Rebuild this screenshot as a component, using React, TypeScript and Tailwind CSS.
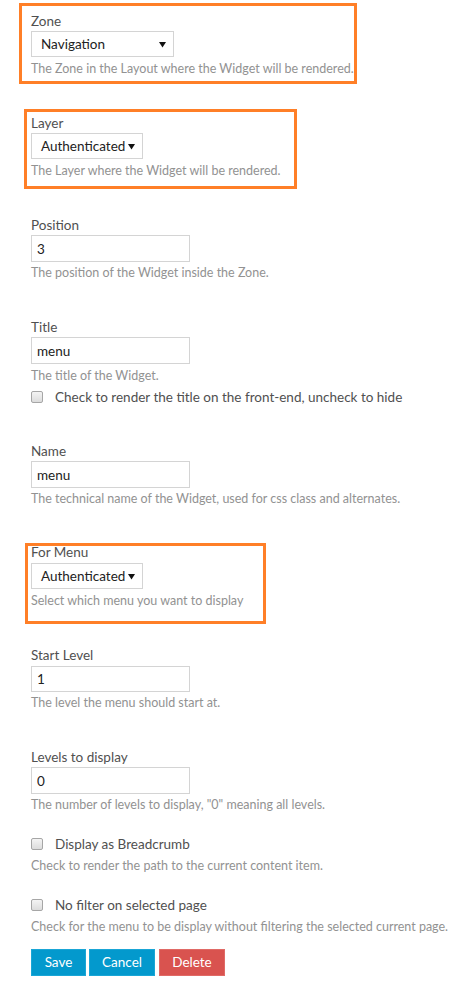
import React from 'react';

const font = { fontFamily: 'Lato, "Open Sans", sans-serif' };

const Label = ({ children, className = '' }: { children: React.ReactNode; className?: string }) => (
	<label className={`block text-[13.5px] leading-[20px] text-[#505050] ${className}`}>{children}</label>
);

const Help = ({ children, className = 'mt-[2px]' }: { children: React.ReactNode; className?: string }) => (
	<div className={`whitespace-nowrap text-[12.5px] leading-[18px] text-[#929292] ${className}`}>{children}</div>
);

const Caret = () => (
	<svg width="7" height="7" viewBox="0 0 7 7" className="shrink-0">
		<path d="M0 1 L7 1 L3.5 6.5 Z" fill="#111" />
	</svg>
);

const Select = ({ value, width }: { value: string; width: string }) => (
	<div
		className={`flex h-[26px] items-center justify-between border border-[#d4d4d4] bg-white pl-[9px] pr-[7px] text-[13.5px] text-[#222] ${width}`}
	>
		<span>{value}</span>
		<Caret />
	</div>
);

const TextInput = ({ value, className = 'h-[27px]' }: { value: string; className?: string }) => (
	<input
		readOnly
		value={value}
		className={`block w-[159px] border border-[#d4d4d4] bg-white px-[5px] text-[13.5px] text-[#222] outline-none ${className}`}
		style={font}
	/>
);

const Check = ({ label, className }: { label: string; className: string }) => (
	<div className={`flex h-[20px] items-center ${className}`}>
		<span className="block h-[12px] w-[12px] rounded-[2px] border border-[#a6a6a6] bg-gradient-to-b from-[#f4f4f4] to-[#dcdcdc]" />
		<span className="ml-[12px] text-[13.5px] text-[#505050]">{label}</span>
	</div>
);

const App = () => {
	return (
		<div className="min-h-[999px] bg-white pb-[20px] pl-[19px] pt-[3px]" style={font}>
			{/* Zone */}
			<div className="w-[338px] border-[3px] border-[#ff7f27] pb-[3px] pl-[9px] pt-[5px]">
				<Label>Zone</Label>
				<Select value="Navigation" width="w-[143px]" />
				<Help className="mt-[3px]">The Zone in the Layout where the Widget will be rendered.</Help>
			</div>

			{/* Layer */}
			<div className="ml-[5px] mt-[25px] w-[273px] border-[3px] border-[#ff7f27] pb-[6px] pl-[4px] pt-[1px]">
				<Label>Layer</Label>
				<Select value="Authenticated" width="w-[112px]" />
				<Help className="mt-[3px]">The Layer where the Widget will be rendered.</Help>
			</div>

			<div className="ml-[12px]">
				<Label className="mt-[26px]">Position</Label>
				<TextInput value="3" />
				<Help>The position of the Widget inside the Zone.</Help>

				<Label className="mt-[35px]">Title</Label>
				<TextInput value="menu" />
				<Help className="mt-[3px]">The title of the Widget.</Help>
				<Check className="mt-[2px]" label="Check to render the title on the front-end, uncheck to hide" />

				<Label className="mt-[34px]">Name</Label>
				<TextInput value="menu" />
				<Help>The technical name of the Widget, used for css class and alternates.</Help>
			</div>

			{/* For Menu */}
			<div className="ml-[6px] mt-[35px] w-[241px] border-[3px] border-[#ff7f27] pb-[11px] pl-[3px]">
				<Label className="-mt-[4px] mb-[1px]">For Menu</Label>
				<Select value="Authenticated" width="w-[112px]" />
				<Help className="mt-[3px]">Select which menu you want to display</Help>
			</div>

			<div className="ml-[12px]">
				<Label className="mb-[1px] mt-[21px]">Start Level</Label>
				<TextInput value="1" className="h-[26px]" />
				<Help>The level the menu should start at.</Help>

				<Label className="mt-[35px]">Levels to display</Label>
				<TextInput value="0" />
				<Help>The number of levels to display, "0" meaning all levels.</Help>

				<Check className="mt-[20px]" label="Display as Breadcrumb" />
				<Help className="mt-[3px]">Check to render the path to the current content item.</Help>

				<Check className="mt-[20px]" label="No filter on selected page" />
				<Help className="mt-[3px]">Check for the menu to be display without filtering the selected current page.</Help>

				<div className="mt-[13px] flex">
					<button className="h-[27px] w-[55px] border border-[#1aa6d6] bg-[#0399cd] text-[13.5px] text-white">Save</button>
					<button className="ml-[3px] h-[27px] w-[66px] border border-[#1aa6d6] bg-[#0399cd] text-[13.5px] text-white">Cancel</button>
					<button className="ml-[4px] h-[27px] w-[66px] border border-[#e06a66] bg-[#d9534f] text-[13.5px] text-white">Delete</button>
				</div>
			</div>
		</div>
	);
};

export default App;
